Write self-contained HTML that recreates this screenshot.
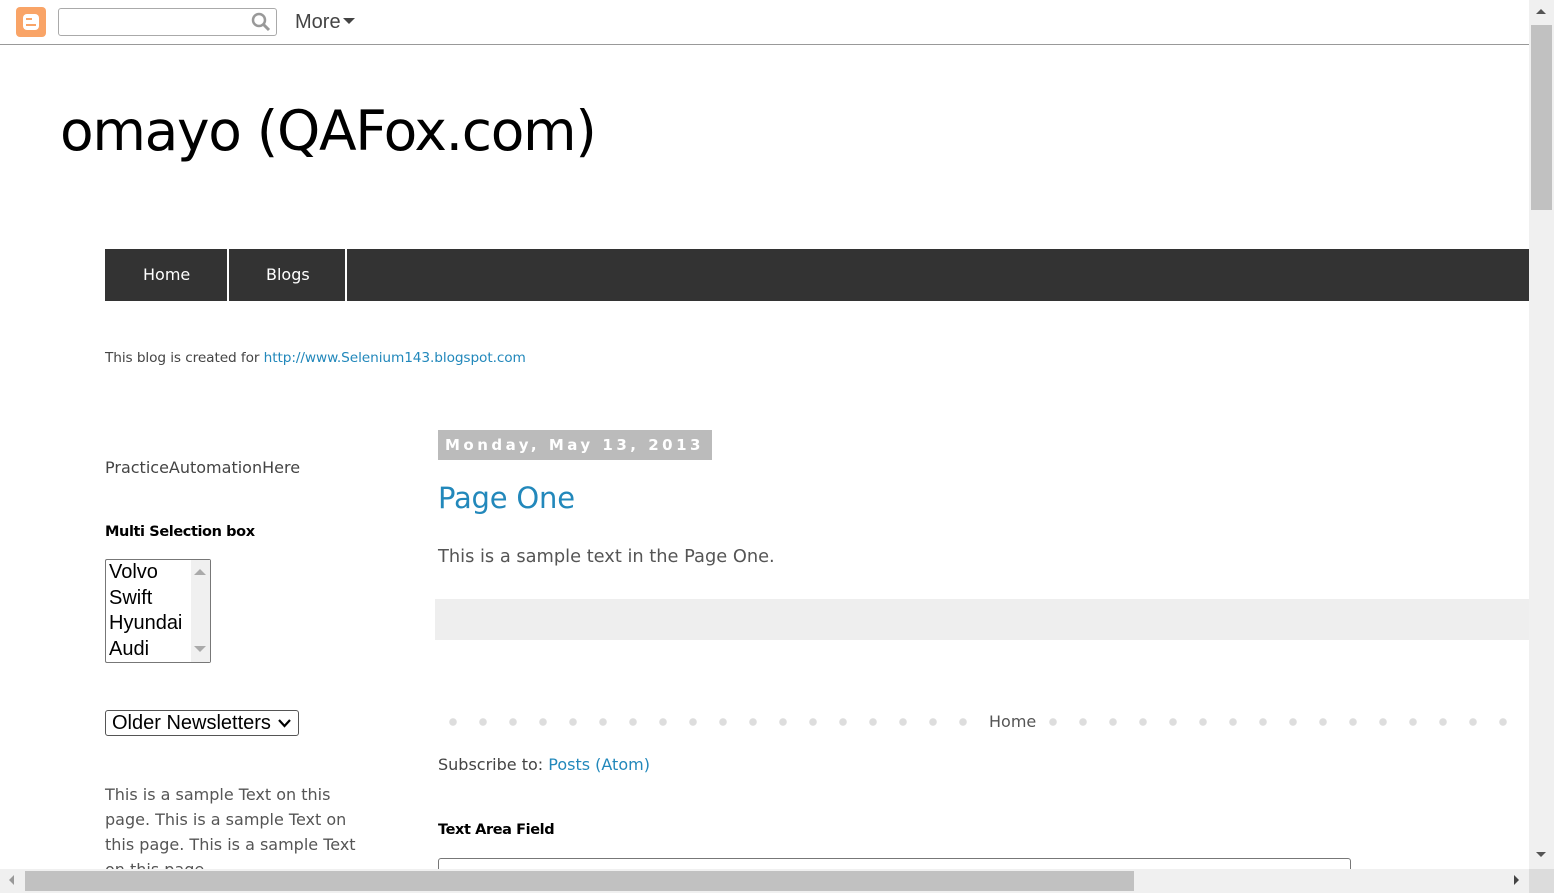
<!DOCTYPE html>
<html><head><style>
body{margin:0;width:1554px;height:893px;overflow:hidden;background:#fff;font-family:"DejaVu Sans","Liberation Sans",sans-serif;position:relative;color:#222}
.a{position:absolute;white-space:nowrap}
</style></head><body>
<div class="a" style="left:0;top:0;width:1529px;height:44px;border-bottom:1px solid #999;background:#fff"></div>
<div class="a" style="left:16px;top:7px;width:30px;height:30px;background:#f9a467;border-radius:4px"></div>
<div class="a" style="left:23px;top:14px;width:16px;height:16px;background:#fff;border-radius:4px"></div>
<div class="a" style="left:26px;top:18px;width:6px;height:2px;background:#f9a467"></div>
<div class="a" style="left:26px;top:24px;width:10px;height:2px;background:#f9a467"></div>
<div class="a" style="left:58px;top:8px;width:217px;height:26px;border:1px solid #aaa;border-radius:3px"></div>
<svg class="a" style="left:250px;top:11px" width="22" height="22"><circle cx="9" cy="9" r="6" stroke="#999" stroke-width="2.5" fill="none"/><line x1="13" y1="13" x2="19" y2="19" stroke="#999" stroke-width="3"/></svg>
<div class="a" style="left:295px;top:11px;font:20px 'Liberation Sans',sans-serif;color:#444">More</div>
<svg class="a" style="left:343px;top:18px" width="12" height="8"><path d="M0 0H12L6 6Z" fill="#444"/></svg>

<div class="a" style="left:60px;top:99px;font-size:55px;color:#000;letter-spacing:-1.3px">omayo (QAFox.com)</div>

<div class="a" style="left:105px;top:249px;width:1424px;height:52px;background:#333"></div>
<div class="a" style="left:227px;top:249px;width:2px;height:52px;background:#fff"></div>
<div class="a" style="left:345px;top:249px;width:2px;height:52px;background:#fff"></div>
<div class="a" style="left:143px;top:265px;font-size:16px;color:#fff">Home</div>
<div class="a" style="left:266px;top:265px;font-size:16px;color:#fff">Blogs</div>

<div class="a" style="left:105px;top:350px;font-size:13.7px;color:#444;letter-spacing:-0.1px">This blog is created for <span style="color:#2288bb">http://www.Selenium143.blogspot.com</span></div>

<div class="a" style="left:105px;top:458px;font-size:16px;color:#444">PracticeAutomationHere</div>
<div class="a" style="left:105px;top:524px;font-size:14.5px;color:#000;font-weight:bold;letter-spacing:-0.4px">Multi Selection box</div>
<div class="a" style="left:105px;top:559px;width:104px;height:102px;border:1px solid #777;border-radius:2px;font:20px 'Liberation Sans',sans-serif;color:#000;line-height:25.5px">
<div style="position:absolute;left:85px;top:0;width:19px;height:102px;background:#f0f0f0"></div>
<svg style="position:absolute;left:88px;top:9px" width="12" height="8"><path d="M0 6H12L6 0Z" fill="#aaa"/></svg>
<svg style="position:absolute;left:88px;top:86px" width="12" height="8"><path d="M0 0H12L6 6Z" fill="#aaa"/></svg>
<div style="padding-left:3px">Volvo<br>Swift<br>Hyundai<br>Audi</div></div>
<div class="a" style="left:105px;top:710px;width:192px;height:24px;border:1px solid #555;border-radius:3px;font:20px 'Liberation Sans',sans-serif;color:#000;line-height:25px"><span style="padding-left:6px">Older Newsletters</span>
<svg style="position:absolute;left:172px;top:8px" width="13" height="9"><path d="M1 1L6.5 7L12 1" stroke="#000" stroke-width="2.2" fill="none"/></svg></div>
<div class="a" style="left:105px;top:782px;font-size:16px;color:#555;line-height:25px">This is a sample Text on this<br>page. This is a sample Text on<br>this page. This is a sample Text<br>on this page.</div>

<div class="a" style="left:438px;top:430px;width:274px;height:30px;background:#bbb"></div>
<div class="a" style="left:445px;top:436px;font-size:15px;font-weight:bold;color:#fff;letter-spacing:3.5px">Monday, May 13, 2013</div>
<div class="a" style="left:438px;top:481px;font-size:29px;color:#2288bb;letter-spacing:-0.2px">Page One</div>
<div class="a" style="left:438px;top:546px;font-size:17.8px;color:#555">This is a sample text in the Page One.</div>
<div class="a" style="left:435px;top:599px;width:1094px;height:41px;background:#eee"></div>
<div class="a" style="left:438px;top:712px;width:1090px;height:20px;background:radial-gradient(circle,#ddd 3.5px,transparent 4px) 0 0/30px 20px"></div>
<div class="a" style="left:975px;top:710px;width:70px;height:24px;background:#fff"></div>
<div class="a" style="left:989px;top:712px;font-size:16px;color:#555">Home</div>
<div class="a" style="left:438px;top:755px;font-size:16px;color:#444">Subscribe to: <span style="color:#2288bb">Posts (Atom)</span></div>
<div class="a" style="left:438px;top:822px;font-size:14.5px;font-weight:bold;color:#000;letter-spacing:-0.4px">Text Area Field</div>
<div class="a" style="left:438px;top:858px;width:911px;height:20px;border:1px solid #777;border-radius:3px"></div>

<div class="a" style="left:1529px;top:0;width:25px;height:893px;background:#f0f0f0"></div>
<div class="a" style="left:1531px;top:25px;width:21px;height:185px;background:#c1c1c1"></div>
<svg class="a" style="left:1536px;top:8px" width="12" height="8"><path d="M0 6H10L5 1Z" fill="#555"/></svg>
<svg class="a" style="left:1536px;top:851px" width="12" height="8"><path d="M0 1H10L5 6Z" fill="#555"/></svg>
<div class="a" style="left:0;top:869px;width:1529px;height:24px;background:#f0f0f0"></div>
<div class="a" style="left:1529px;top:869px;width:25px;height:24px;background:#dcdcdc"></div>
<div class="a" style="left:25px;top:871px;width:1109px;height:20px;background:#c1c1c1"></div>
<svg class="a" style="left:8px;top:875px" width="8" height="12"><path d="M6 0V10L1 5Z" fill="#999"/></svg>
<svg class="a" style="left:1513px;top:875px" width="8" height="12"><path d="M1 0V10L6 5Z" fill="#444"/></svg>
</body></html>
